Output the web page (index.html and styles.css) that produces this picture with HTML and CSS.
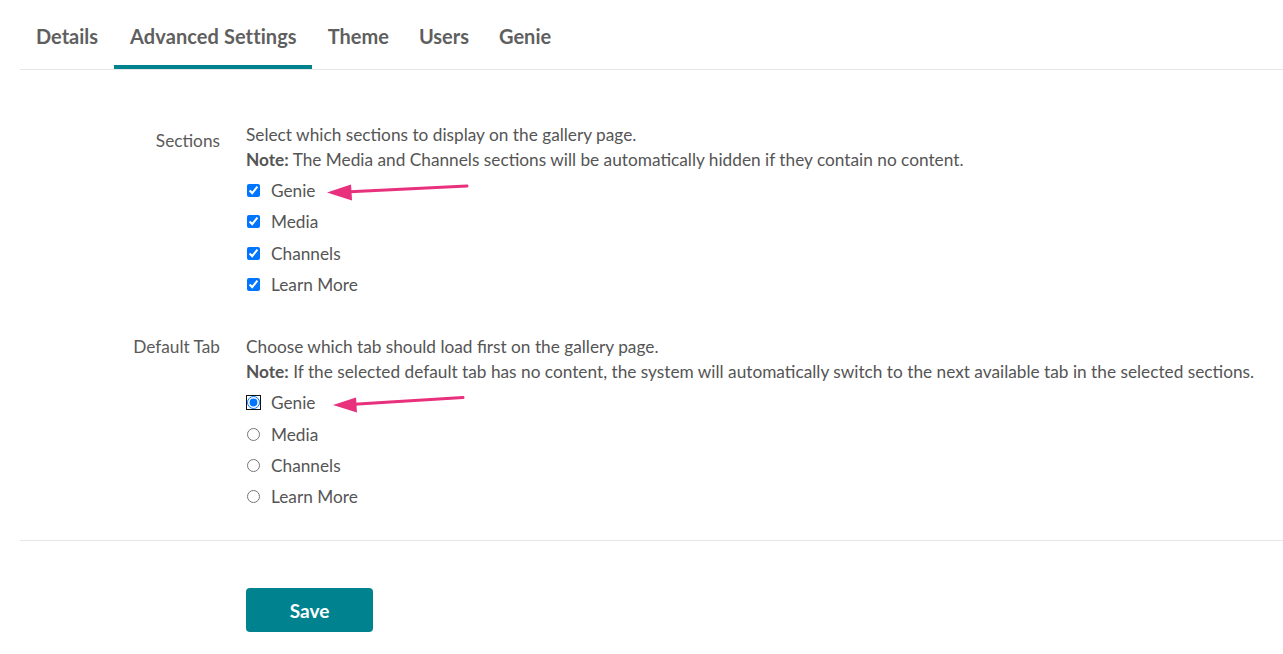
FILE: index.html
```html
<!DOCTYPE html>
<html lang="en">
<head>
<meta charset="utf-8">
<title>Advanced Settings</title>
<link rel="stylesheet" href="styles.css">
</head>
<body>
<div class="page">
  <nav class="tabs">
    <a class="tab first">Details</a>
    <a class="tab active">Advanced Settings</a>
    <a class="tab">Theme</a>
    <a class="tab">Users</a>
    <a class="tab">Genie</a>
  </nav>

  <form class="form">
    <div class="field first">
      <div class="label label-low">Sections</div>
      <div class="control">
        <p class="help">Select which sections to display on the gallery page.</p>
        <p class="help"><b>Note:</b> The Media and Channels sections will be automatically hidden if they contain no content.</p>
        <ul class="options">
          <li class="option"><input type="checkbox" checked><span>Genie</span></li>
          <li class="option"><input type="checkbox" checked><span>Media</span></li>
          <li class="option"><input type="checkbox" checked><span>Channels</span></li>
          <li class="option"><input type="checkbox" checked><span>Learn More</span></li>
        </ul>
      </div>
    </div>

    <div class="field second">
      <div class="label">Default Tab</div>
      <div class="control">
        <p class="help">Choose which tab should load first on the gallery page.</p>
        <p class="help"><b>Note:</b> If the selected default tab has no content, the system will automatically switch to the next available tab in the selected sections.</p>
        <ul class="options">
          <li class="option"><input type="radio" name="tab" class="focused" checked><span>Genie</span></li>
          <li class="option"><input type="radio" name="tab"><span>Media</span></li>
          <li class="option"><input type="radio" name="tab"><span>Channels</span></li>
          <li class="option"><input type="radio" name="tab"><span>Learn More</span></li>
        </ul>
      </div>
    </div>

    <div class="actions">
      <button type="button" class="save">Save</button>
    </div>
  </form>

  <svg class="annotations" width="1283" height="654" viewBox="0 0 1283 654">
    <line x1="467" y1="186" x2="345" y2="192" class="arrow-line"/>
    <polygon points="327,192.5 351,184.5 352,200.5" class="arrow-head"/>
    <line x1="463" y1="397.5" x2="350" y2="404.5" class="arrow-line"/>
    <polygon points="333,405 356,397.5 357,412.5" class="arrow-head"/>
  </svg>
</div>
</body>
</html>
```

FILE: styles.css
```css
* { box-sizing: border-box; }

html, body {
  margin: 0;
  padding: 0;
  background: #fff;
}

body {
  font-family: Lato, "Liberation Sans", sans-serif;
  color: #555;
  font-size: 17.25px;
}

.page {
  position: relative;
  width: 1283px;
  height: 654px;
  overflow: hidden;
}

.tabs {
  display: flex;
  margin-left: 20px;
  border-bottom: 1px solid #e6e6e6;
}

.tab {
  display: block;
  padding: 22px 14px 15px 16px;
  line-height: 28px;
  font-size: 20px;
  font-weight: 700;
  color: #5f5f5f;
  border-bottom: 4px solid transparent;
}

.tab.first {
  padding-right: 16px;
}

.tab.active {
  border-bottom-color: #00838f;
  letter-spacing: 0.08px;
  padding-right: 15px;
}

.form {
  margin: 0 0 0 20px;
  padding-top: 52px;
}

.field {
  display: grid;
  grid-template-columns: 200px 1fr;
  column-gap: 26px;
}

.field.second {
  margin-top: 34px;
  padding-bottom: 28px;
  border-bottom: 1px solid #e6e6e6;
}

.label {
  text-align: right;
  line-height: 25px;
  color: #5a5a5a;
}

.label-low {
  padding-top: 6px;
}

.help {
  margin: 0;
  line-height: 25px;
}

.help b {
  font-weight: 700;
}

.options {
  list-style: none;
  margin: 3px 0 0;
  padding: 0;
}

.option {
  display: flex;
  align-items: center;
  height: 31.3px;
}

.option input {
  width: 13px;
  height: 13px;
  margin: 0 11px 0 1px;
  accent-color: #0075ff;
}

.option input.focused {
  outline: 1px solid #111;
  outline-offset: 0;
  border-radius: 0;
}

.actions {
  padding: 47px 0 0 226px;
}

.save {
  width: 127px;
  height: 44px;
  border: none;
  border-radius: 4px;
  background: #00838f;
  color: #fff;
  font-family: Lato, "Liberation Sans", sans-serif;
  font-weight: 700;
  font-size: 19px;
  cursor: pointer;
}

.annotations {
  position: absolute;
  left: 0;
  top: 0;
  pointer-events: none;
}

.arrow-line {
  stroke: #e8307c;
  stroke-width: 3;
  stroke-linecap: round;
}

.arrow-head {
  fill: #e8307c;
}
```
